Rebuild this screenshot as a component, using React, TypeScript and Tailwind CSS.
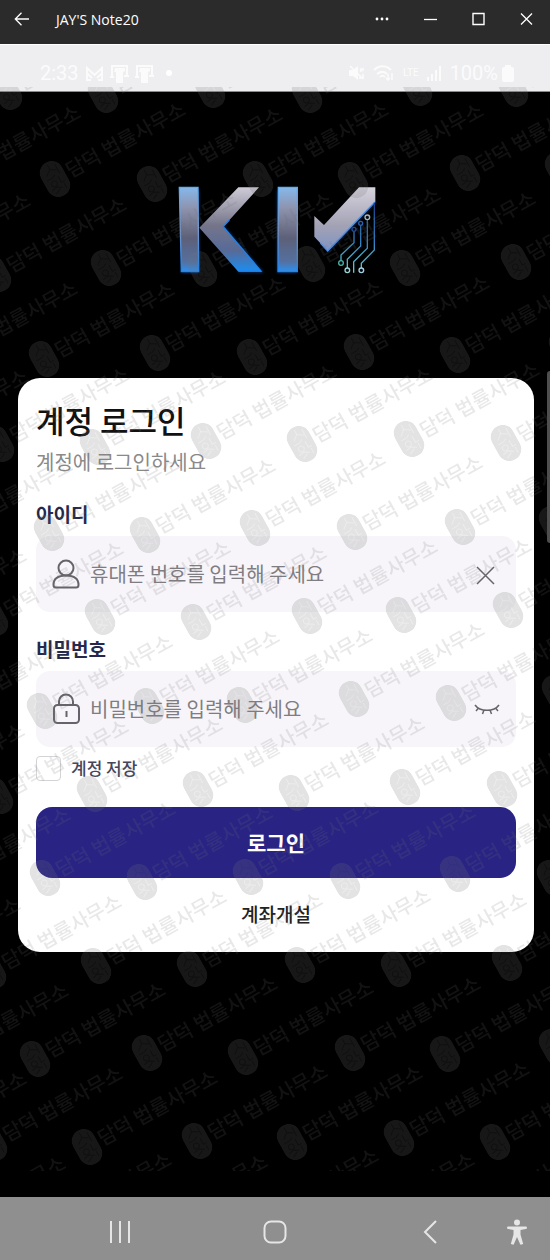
import { useState } from "react";

// Seal centres of the repeated office mark, row by row
const markRows: [number, number][][] = [
  [[-94, 97], [7, 92], [103, 95], [210, 90], [307, 95], [417, 88], [513, 89]],
  [[-50, 182], [55, 179], [152, 184], [258, 179], [353, 180], [465, 173], [560, 170]],
  [[-100, 270], [-4, 274], [106, 268], [202, 269], [310, 264], [405, 268], [516, 262]],
  [[-53, 358], [44, 359], [155, 353], [252, 357], [359, 352], [455, 355], [564, 348]],
  [[-102, 446], [-1, 444], [95, 447], [206, 441], [302, 444], [409, 439], [506, 443]],
  [[-58, 535], [49, 533], [145, 535], [255, 528], [352, 532], [460, 527], [554, 524]],
  [[-104, 625], [-7, 618], [100, 617], [196, 622], [307, 616], [401, 615], [508, 610]],
  [[-54, 712], [42, 711], [149, 706], [242, 705], [354, 699], [451, 703], [557, 693]],
  [[-106, 800], [-2, 796], [92, 794], [198, 789], [294, 793], [405, 787], [502, 789]],
  [[-60, 884], [45, 878], [142, 882], [248, 877], [345, 881], [455, 874], [552, 878]],
  [[-110, 974], [-9, 971], [96, 966], [192, 969], [300, 965], [396, 969], [507, 963]],
  [[-62, 1060], [35, 1059], [147, 1053], [243, 1057], [350, 1053], [445, 1054], [554, 1047]],
  [[-104, 1148], [-8, 1143], [87, 1147], [197, 1141], [292, 1142], [399, 1138], [495, 1142]],
  [[-65, 1233], [41, 1229], [137, 1231], [248, 1225], [344, 1229], [455, 1224]],
];

function OfficeMarks() {
  return (
    <svg
      className="pointer-events-none absolute left-0 top-[-5px] h-[1084px] w-[550px]"
      viewBox="0 87 550 1084"
      aria-hidden="true"
    >
      <defs>
        <mask id="seal">
          <rect x="-12" y="-19" width="24" height="38" rx="12" fill="#fff" />
          <path
            d="M0 -16v5l-6 5M0 -11l6 4M7 -13v10M-8 -2h6l4 -2M-3 1a3 3 0 1 0 .1 0M4 -1v7h4M-8 9l6 -1 5 3M-6 14l6 -3M6 8v6"
            fill="none"
            stroke="#aaa"
            strokeWidth="1"
          />
        </mask>
      </defs>
      <g fill="#747474" opacity="0.2">
        {markRows.flat().map(([x, y]) => (
          <g key={`${x},${y}`} transform={`translate(${x} ${y}) rotate(-29)`}>
            <rect x="-12" y="-19" width="24" height="38" rx="12" mask="url(#seal)" />
            <text
              x="14"
              y="7"
              className="font-['Noto_Sans_CJK_KR',sans-serif] text-[20px] font-medium opacity-80"
            >
              담덕 법률사무소
            </text>
          </g>
        ))}
      </g>
    </svg>
  );
}

function TitleBar() {
  return (
    <header className="flex h-11 items-center bg-[#2b2b2b] pb-1.5 text-white">
      <button className="flex h-8 w-11 items-center justify-center" aria-label="Back">
        <svg width="16" height="16" viewBox="0 0 16 16" fill="none" stroke="currentColor" strokeWidth="1.3">
          <path d="M15 8H1.5M7.5 1.8 1.3 8l6.2 6.2" />
        </svg>
      </button>
      <h1 className="ml-3 flex-1 font-['Open_Sans',sans-serif] text-[14px]">JAY'S Note20</h1>
      <button className="flex h-8 w-12 items-center justify-center" aria-label="More">
        <svg width="14" height="4" viewBox="0 0 14 4" fill="currentColor">
          <circle cx="2" cy="2" r="1.4" />
          <circle cx="7" cy="2" r="1.4" />
          <circle cx="12" cy="2" r="1.4" />
        </svg>
      </button>
      <button className="flex h-8 w-12 items-center justify-center" aria-label="Minimize">
        <svg width="14" height="14" viewBox="0 0 14 14" stroke="currentColor" strokeWidth="1.3">
          <path d="M1 7.5h13" />
        </svg>
      </button>
      <button className="flex h-8 w-12 items-center justify-center" aria-label="Maximize">
        <svg width="14" height="14" viewBox="0 0 14 14" fill="none" stroke="currentColor" strokeWidth="1.4">
          <path d="M2 1.5h11v11H2z" />
        </svg>
      </button>
      <button className="flex h-8 w-12 items-center justify-center" aria-label="Close">
        <svg width="14" height="14" viewBox="0 0 14 14" stroke="currentColor" strokeWidth="1.3">
          <path d="m2 1.5 11 11M13 1.5l-11 11" />
        </svg>
      </button>
    </header>
  );
}

function PictureIcon() {
  return (
    <svg width="19" height="19" viewBox="0 0 19 19" fill="currentColor">
      <path d="M1 1h17v11h-2V3H3v10H1z" />
      <path d="M5 4h10v3l-2 1v11H6V8H4z" />
      <path d="M14 11h5v2h-5zM0 12h4v2H0z" />
    </svg>
  );
}

function StatusBar() {
  return (
    <div className="flex h-12 items-center justify-between border-b border-t border-b-[#8a8a8a] border-t-white bg-[#eeeef0] pl-10 pr-9 pt-2.5 font-['Roboto',sans-serif] text-[20px] text-[#fbfbfc]">
      <div className="flex items-center gap-1.5">
        <span>2:33</span>
        <svg width="19" height="15" viewBox="0 0 19 15" fill="none" stroke="currentColor" strokeWidth="2">
          <path d="M2 14V2l7.5 7L17 2v12M2 7l5 5M17 7l-5 5M1 14h5M13 14h5" />
        </svg>
        <PictureIcon />
        <PictureIcon />
        <span className="ml-1.5 size-1.5 rounded-full bg-white" />
      </div>
      <div className="flex items-center gap-2">
        <svg width="16" height="16" viewBox="0 0 16 16" fill="currentColor">
          <path d="M0 5h4l5-4v14l-5-4H0z" />
          <path d="m1 1 13 13M11 5l1-1v3M11 10v4M14 3v3M14 9v5" stroke="currentColor" strokeWidth="1.5" />
        </svg>
        <svg width="22" height="17" viewBox="0 0 22 17" fill="none" stroke="currentColor" strokeWidth="2">
          <path d="M1 5c5-5 12-5 17 0M4 9c4-3 7-3 10 0M7 12c2-2 3-2 5 0" />
          <path d="M15 9v6M19 8v7M13 13l2 2 2-2" strokeWidth="1.5" />
        </svg>
        <span className="text-[10px] leading-none">LTE</span>
        <svg width="15" height="16" viewBox="0 0 15 16" fill="currentColor">
          <path d="M0 12h2v4H0zM4 9h2v7H4zM8 5h2v11H8zM12 1h2v15h-2z" />
        </svg>
        <span className="flex items-center gap-1">
          100%
          <svg width="12" height="17" viewBox="0 0 12 17" fill="currentColor">
            <path d="M3 0h6v2h1a2 2 0 0 1 2 2v11a2 2 0 0 1-2 2H2a2 2 0 0 1-2-2V4a2 2 0 0 1 2-2h1z" />
          </svg>
        </span>
      </div>
    </div>
  );
}

function Logo() {
  return (
    <svg width="204" height="90" viewBox="51 45 612 270" role="img" aria-label="KM">
      <defs>
        <linearGradient id="bar" x1="0" y1="0" x2="0" y2="1">
          <stop offset="0" stopColor="#86b8ec" />
          <stop offset="0.25" stopColor="#8e93ad" />
          <stop offset="0.6" stopColor="#5d6078" />
          <stop offset="0.88" stopColor="#54709f" />
          <stop offset="1" stopColor="#2d8ff0" />
        </linearGradient>
        <linearGradient id="arm" x1="0" y1="0" x2="0" y2="1">
          <stop offset="0" stopColor="#cfccd8" />
          <stop offset="0.45" stopColor="#75758a" />
          <stop offset="0.75" stopColor="#566a9a" />
          <stop offset="1" stopColor="#1b8df2" />
        </linearGradient>
        <linearGradient id="tick" x1="0" y1="0" x2="0" y2="1">
          <stop offset="0" stopColor="#d6d3dd" />
          <stop offset="0.6" stopColor="#a3a2b4" />
          <stop offset="1" stopColor="#7f93c4" />
        </linearGradient>
        <linearGradient id="edge" x1="0" y1="0" x2="0" y2="1">
          <stop offset="0" stopColor="#58aefa" />
          <stop offset="0.5" stopColor="#7a94c4" />
          <stop offset="1" stopColor="#1486ff" />
        </linearGradient>
        <linearGradient id="trace" gradientUnits="userSpaceOnUse" x1="0" y1="100" x2="0" y2="305">
          <stop offset="0" stopColor="#1d3f86" />
          <stop offset="0.55" stopColor="#2f7cc0" />
          <stop offset="1" stopColor="#62cfc9" />
        </linearGradient>
        <filter id="glow" x="-10%" y="-10%" width="120%" height="120%">
          <feGaussianBlur stdDeviation="4" />
        </filter>
      </defs>
      <g fill="none" stroke="#0b5fd0" strokeWidth="5" opacity="0.7" filter="url(#glow)">
        <path d="M114 60v245H64M190 170l115 135h-70M355 60v245h57M646 95 503 243" />
      </g>
      <g strokeWidth="4">
        <path d="M58 52h56l2 253H64z" fill="url(#bar)" stroke="url(#edge)" />
        <path d="M235 52h62L190 170l115 135h-70L118 173z" fill="url(#arm)" />
        <path d="M208 150 190 170l113 133h-66" fill="none" stroke="#1d82ee" />
        <path d="M355 52h57v253h-58z" fill="url(#bar)" stroke="url(#edge)" />
        <path d="M463 138l29 27L597 52h49v43L503 243l-40-43z" fill="url(#tick)" />
        <path d="M645 96 503 243l-22-24" fill="none" stroke="#4a8de8" />
      </g>
      <g fill="none" stroke="url(#trace)" strokeWidth="4">
        <path d="M582 184v34l-39 37v18" />
        <path d="M602 166v62l-40 40v26" />
        <path d="M622 148v87l-41 40v33" />
        <path d="M643 98v142l-39 40v14" />
      </g>
      <g fill="#04080f" strokeWidth="4">
        <circle cx="582" cy="178" r="6" stroke="#244a94" />
        <circle cx="602" cy="160" r="6" stroke="#2f5fae" />
        <circle cx="622" cy="142" r="7" stroke="#a9b4bd" />
        <circle cx="543" cy="279" r="7" stroke="#49b3a6" />
        <circle cx="562" cy="301" r="7" stroke="#9bd3d6" />
        <circle cx="604" cy="301" r="7" stroke="#a7cfe2" />
      </g>
    </svg>
  );
}

function LoginCard() {
  const [userId, setUserId] = useState("");
  const [password, setPassword] = useState("");
  const [showPassword, setShowPassword] = useState(false);

  return (
    <form
      className="ml-[18px] mr-4 mt-[103px] flex flex-col rounded-[22px] bg-white px-[18px] pb-6 pt-[22px]"
      onSubmit={(e) => e.preventDefault()}
    >
      <h2 className="text-[31px] font-medium leading-10 text-[#111]">계정 로그인</h2>
      <p className="mt-2 text-[20px] leading-7 text-[#8a8a8a]">계정에 로그인하세요</p>

      <label htmlFor="userId" className="mt-6 text-[19px] font-bold leading-7 text-[#25284a]">
        아이디
      </label>
      <div className="mt-2 flex h-[76px] items-center rounded-[14px] bg-[#f7f5f9] px-4 text-[#66646a]">
        <svg className="shrink-0" width="28" height="30" viewBox="0 0 28 30" fill="none" stroke="currentColor" strokeWidth="2">
          <circle cx="14" cy="9" r="7.5" />
          <path d="M1.500 26c0-6.500 5-9.500 12.500-9.500S26.500 19.500 26.500 26c0 1.500-1 2.500-2.500 2.500H4c-1.500 0-2.500-1-2.500-2.500z" />
        </svg>
        <input
          id="userId"
          type="text"
          value={userId}
          onChange={(e) => setUserId(e.target.value)}
          placeholder="휴대폰 번호를 입력해 주세요"
          className="ml-[10px] min-w-0 flex-1 text-[20px] leading-7 outline-none placeholder:text-[#7f7d82]"
        />
        <button type="button" aria-label="지우기" onClick={() => setUserId("")}>
          <svg width="30" height="28" viewBox="0 0 30 28" fill="none" stroke="currentColor" strokeWidth="1.5">
            <path d="m7 7 17 17M24 7 7 24" />
          </svg>
        </button>
      </div>

      <label htmlFor="password" className="mt-[23px] text-[19px] font-bold leading-7 text-[#25284a]">
        비밀번호
      </label>
      <div className="mt-2 flex h-[76px] items-center rounded-[14px] bg-[#f7f5f9] px-4 text-[#66646a]">
        <svg className="shrink-0" width="28" height="32" viewBox="0 0 28 32" fill="none" stroke="currentColor" strokeWidth="2">
          <rect x="2" y="12" width="25" height="18" rx="3.5" />
          <path d="M7 12V8.500a7 7 0 0 1 14 0V12M14.500 18v6" />
        </svg>
        <input
          id="password"
          type={showPassword ? "text" : "password"}
          value={password}
          onChange={(e) => setPassword(e.target.value)}
          placeholder="비밀번호를 입력해 주세요"
          className="ml-[10px] min-w-0 flex-1 text-[20px] leading-7 outline-none placeholder:text-[#7f7d82]"
        />
        <button type="button" aria-label="비밀번호 표시" onClick={() => setShowPassword(!showPassword)}>
          <svg width="26" height="14" viewBox="0 0 26 14" fill="none" stroke="currentColor" strokeWidth="1.5">
            <path d="M1 3c5 7 19 7 24 0M4.500 6 2 9M10 8l-1.500 4M16 8l1.500 4M21.500 6 24 9" />
          </svg>
        </button>
      </div>

      <label className="mt-2 flex h-[26px] items-center gap-[10px] text-[17px] font-medium text-[#45465c]">
        <input type="checkbox" className="size-[25px] appearance-none rounded border border-[#d4d4d8] checked:bg-[#292484]" />
        계정 저장
      </label>

      <button type="submit" className="mt-[26px] h-[71px] rounded-2xl bg-[#292484] text-[21px] font-bold text-white">
        로그인
      </button>
      <a href="#signup" className="mt-[22px] self-center text-[19px] font-medium leading-7 text-[#222]">
        계좌개설
      </a>
    </form>
  );
}

function NavigationBar() {
  return (
    <nav className="flex h-[63px] items-center bg-[#8f8f8f] pl-[42px] pt-1.5 text-[#e6e6e6]">
      <button className="flex flex-1 justify-center" aria-label="최근 앱">
        <svg width="22" height="24" viewBox="0 0 22 24" stroke="currentColor" strokeWidth="2">
          <path d="M2 1v22M11 1v22M20 1v22" />
        </svg>
      </button>
      <button className="flex flex-1 justify-center" aria-label="홈">
        <svg width="24" height="24" viewBox="0 0 24 24" fill="none" stroke="currentColor" strokeWidth="2">
          <rect x="1.5" y="1.5" width="21" height="21" rx="6.5" />
        </svg>
      </button>
      <button className="flex flex-1 justify-center" aria-label="뒤로">
        <svg width="14" height="24" viewBox="0 0 14 24" fill="none" stroke="currentColor" strokeWidth="2">
          <path d="M13 1 2 12l11 11" />
        </svg>
      </button>
      <button className="-ml-6 flex w-[66px] justify-center" aria-label="접근성">
        <svg width="20" height="26" viewBox="0 0 20 26" fill="currentColor">
          <circle cx="10" cy="3.5" r="3" />
          <path d="M1.300 7.500h17.400a1.300 1.300 0 0 1 0 2.600l-5.200 1v4.400l2.700 9.500-2.800.8L10 18l-3.400 7.800-2.800-.8 2.700-9.500v-4.400l-5.200-1a1.300 1.300 0 0 1 0-2.600z" />
        </svg>
      </button>
    </nav>
  );
}

export default function App() {
  return (
    <div className="flex min-h-screen flex-col bg-black font-['Noto_Sans_CJK_KR',sans-serif]">
      <TitleBar />
      <StatusBar />
      <main className="relative flex-1 overflow-x-clip">
        <div className="flex justify-center pl-2 pt-[93px]">
          <Logo />
        </div>
        <LoginCard />
        <OfficeMarks />
        <div className="absolute right-0 top-[279px] h-[172px] w-[3px] rounded-l bg-[#4f4d50]" />
      </main>
      <NavigationBar />
    </div>
  );
}
